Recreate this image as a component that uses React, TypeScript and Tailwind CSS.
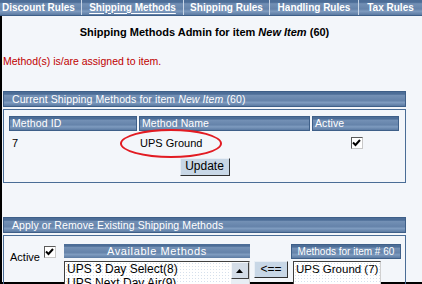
import React from "react";

const bar =
  "bg-[linear-gradient(to_bottom,#4c6d97_0%,#4c6d97_15%,#7390b5_25%,#6583aa_60%,#7e9bbf_75%,#5b7aa2_100%)]";

function Check({ className = "" }: { className?: string }) {
  return (
    <div
      className={`w-[12px] h-[12px] bg-white border border-t-[#5a5a5a] border-l-[#5a5a5a] border-b-[#c8c8c8] border-r-[#c8c8c8] flex items-center justify-center ${className}`}
    >
      <svg width="9" height="8" viewBox="0 0 9 8">
        <path d="M1 3.5 L3.5 6 L8 1" stroke="#000" strokeWidth="2" fill="none" />
      </svg>
    </div>
  );
}

function SectionHeader({ children }: { children: React.ReactNode }) {
  return (
    <div
      className={`h-[16px] border border-[#3e5f88] ${bar} text-white text-[10.5px] leading-[14px] pl-[8px] tracking-[0.1px] whitespace-nowrap`}
    >
      {children}
    </div>
  );
}

function ColHeader({ w, children }: { w: string; children: React.ReactNode }) {
  return (
    <div
      className={`${w} h-[15px] border border-[#3e5f88] ${bar} text-white text-[10.5px] leading-[13px] pl-[2px] tracking-[0.1px]`}
    >
      {children}
    </div>
  );
}

const tabs = [
  { label: "Discount Rules", w: "w-[82px]" },
  { label: "Shipping Methods", w: "w-[102px]", active: true },
  { label: "Shipping Rules", w: "w-[86px]" },
  { label: "Handling Rules", w: "w-[89px]" },
  { label: "Tax Rules", w: "w-[63px]" },
];

export default function App() {
  return (
    <div
      className="w-[422px] h-[284px] overflow-hidden bg-[#f3f6fa] relative"
      style={{ fontFamily: '"Liberation Sans", Arial, sans-serif' }}
    >
      {/* tab bar */}
      <div className={`h-[16px] flex ${bar} border-b border-[#3e5f88]`}>
        {tabs.map((t, i) => (
          <div
            key={t.label}
            className={`${t.w} h-full flex items-center ${i === 0 ? "justify-start pl-[2px]" : "justify-center"} text-white font-bold text-[10px] leading-none whitespace-nowrap ${i < tabs.length - 1 ? "border-r border-[#c9d6e6]" : ""}`}
          >
            <span className={t.active ? "underline underline-offset-2" : ""}>{t.label}</span>
          </div>
        ))}
      </div>

      <div className="h-[268px] border-l-2 border-b-2 border-black pl-[1px] pr-[16px]">
        <div className="pt-[10px] text-center font-bold text-[11px] leading-[13px] text-black">
          Shipping Methods Admin for item <i>New Item</i> (60)
        </div>
        <div className="mt-[16px] text-[10.5px] leading-[13px] text-[#c00000]">
          Method(s) is/are assigned to item.
        </div>

        <div className="mt-[23px]">
          <SectionHeader>
            Current Shipping Methods for item <i>New Item</i> (60)
          </SectionHeader>
          <div className="mt-[2px] h-[74px] border border-[#4a6d96] px-[5px] pt-[6px] relative">
            <div className="flex gap-[2px]">
              <ColHeader w="w-[128px]">Method ID</ColHeader>
              <ColHeader w="w-[171px]">Method Name</ColHeader>
              <ColHeader w="w-[87px]">Active</ColHeader>
            </div>
            <div className="flex items-center h-[20px] mt-[2px] text-[11px] text-black">
              <div className="w-[130px] pl-[3px]">7</div>
              <div className="w-[173px] pl-[1px]">UPS Ground</div>
              <div className="w-[87px] flex justify-center pl-[2px]">
                <Check />
              </div>
            </div>
            <div className="flex justify-center mt-[5px]">
              <div className="w-[50px] h-[18px] bg-[#c8d7e6] border border-t-[#e8eef5] border-l-[#e8eef5] border-b-[#303030] border-r-[#303030] text-[12px] leading-[15px] text-center text-black">
                Update
              </div>
            </div>
            {/* red highlight ellipse */}
            <div className="absolute left-[116px] top-[19px] w-[102px] h-[29px] rounded-[50%] border-2 border-[#e21b22]" />
          </div>
        </div>

        <div className="mt-[34px]">
          <SectionHeader>Apply or Remove Existing Shipping Methods</SectionHeader>
          <div className="mt-[2px] h-[60px] border border-[#4a6d96] flex pt-[8px] pl-[6px]">
            <div className="flex items-start gap-[4px] pt-[2px]">
              <span className="text-[11px] leading-[13px] mt-[5px] text-black">Active</span>
              <Check />
            </div>
            <div className="ml-[8px] w-[186px]">
              <div className={`h-[14px] ${bar} text-white text-[11px] leading-[14px] text-center tracking-[0.6px]`}>
                Available Methods
              </div>
              <div className="mt-[3px] h-[40px] bg-white bg-[radial-gradient(#d6e0ec_1px,transparent_1px)] bg-[length:3px_3px] border border-t-[#404040] border-l-[#404040] border-b-[#d0d0d0] border-r-[#d0d0d0] flex">
                <div className="flex-1 text-[12px] leading-[14px] text-black pl-[2px] whitespace-nowrap">
                  <div>UPS 3 Day Select(8)</div>
                  <div>UPS Next Day Air(9)</div>
                </div>
                <div className="w-[18px] bg-[#e8eef4]">
                  <div className="h-[17px] bg-[#d4dde8] border border-t-[#f4f7fa] border-l-[#f4f7fa] border-b-[#404040] border-r-[#404040] flex items-center justify-center">
                    <svg width="7" height="4" viewBox="0 0 7 4">
                      <path d="M0 4 L3.5 0 L7 4 Z" fill="#000" />
                    </svg>
                  </div>
                </div>
              </div>
            </div>
            <div className="pt-[17px] ml-[4px]">
              <div className="w-[34px] h-[17px] bg-[#c8d7e6] border border-t-[#e8eef5] border-l-[#e8eef5] border-b-[#303030] border-r-[#303030] text-[12px] leading-[14px] text-center text-black">
                &lt;==
              </div>
            </div>
            <div className="ml-[3px] w-[110px]">
              <div className={`h-[15px] border border-[#3e5f88] ${bar} text-white text-[10px] leading-[13px] text-center whitespace-nowrap`}>
                Methods for item # 60
              </div>
              <div className="mt-[2px] ml-[2px] w-[88px] h-[40px] bg-white bg-[radial-gradient(#d6e0ec_1px,transparent_1px)] bg-[length:3px_3px] border border-t-[#404040] border-l-[#404040] border-b-[#d0d0d0] border-r-[#d0d0d0] text-[11.5px] leading-[14px] text-black pl-[2px] whitespace-nowrap">
                UPS Ground (7)
              </div>
            </div>
          </div>
        </div>
      </div>
    </div>
  );
}
